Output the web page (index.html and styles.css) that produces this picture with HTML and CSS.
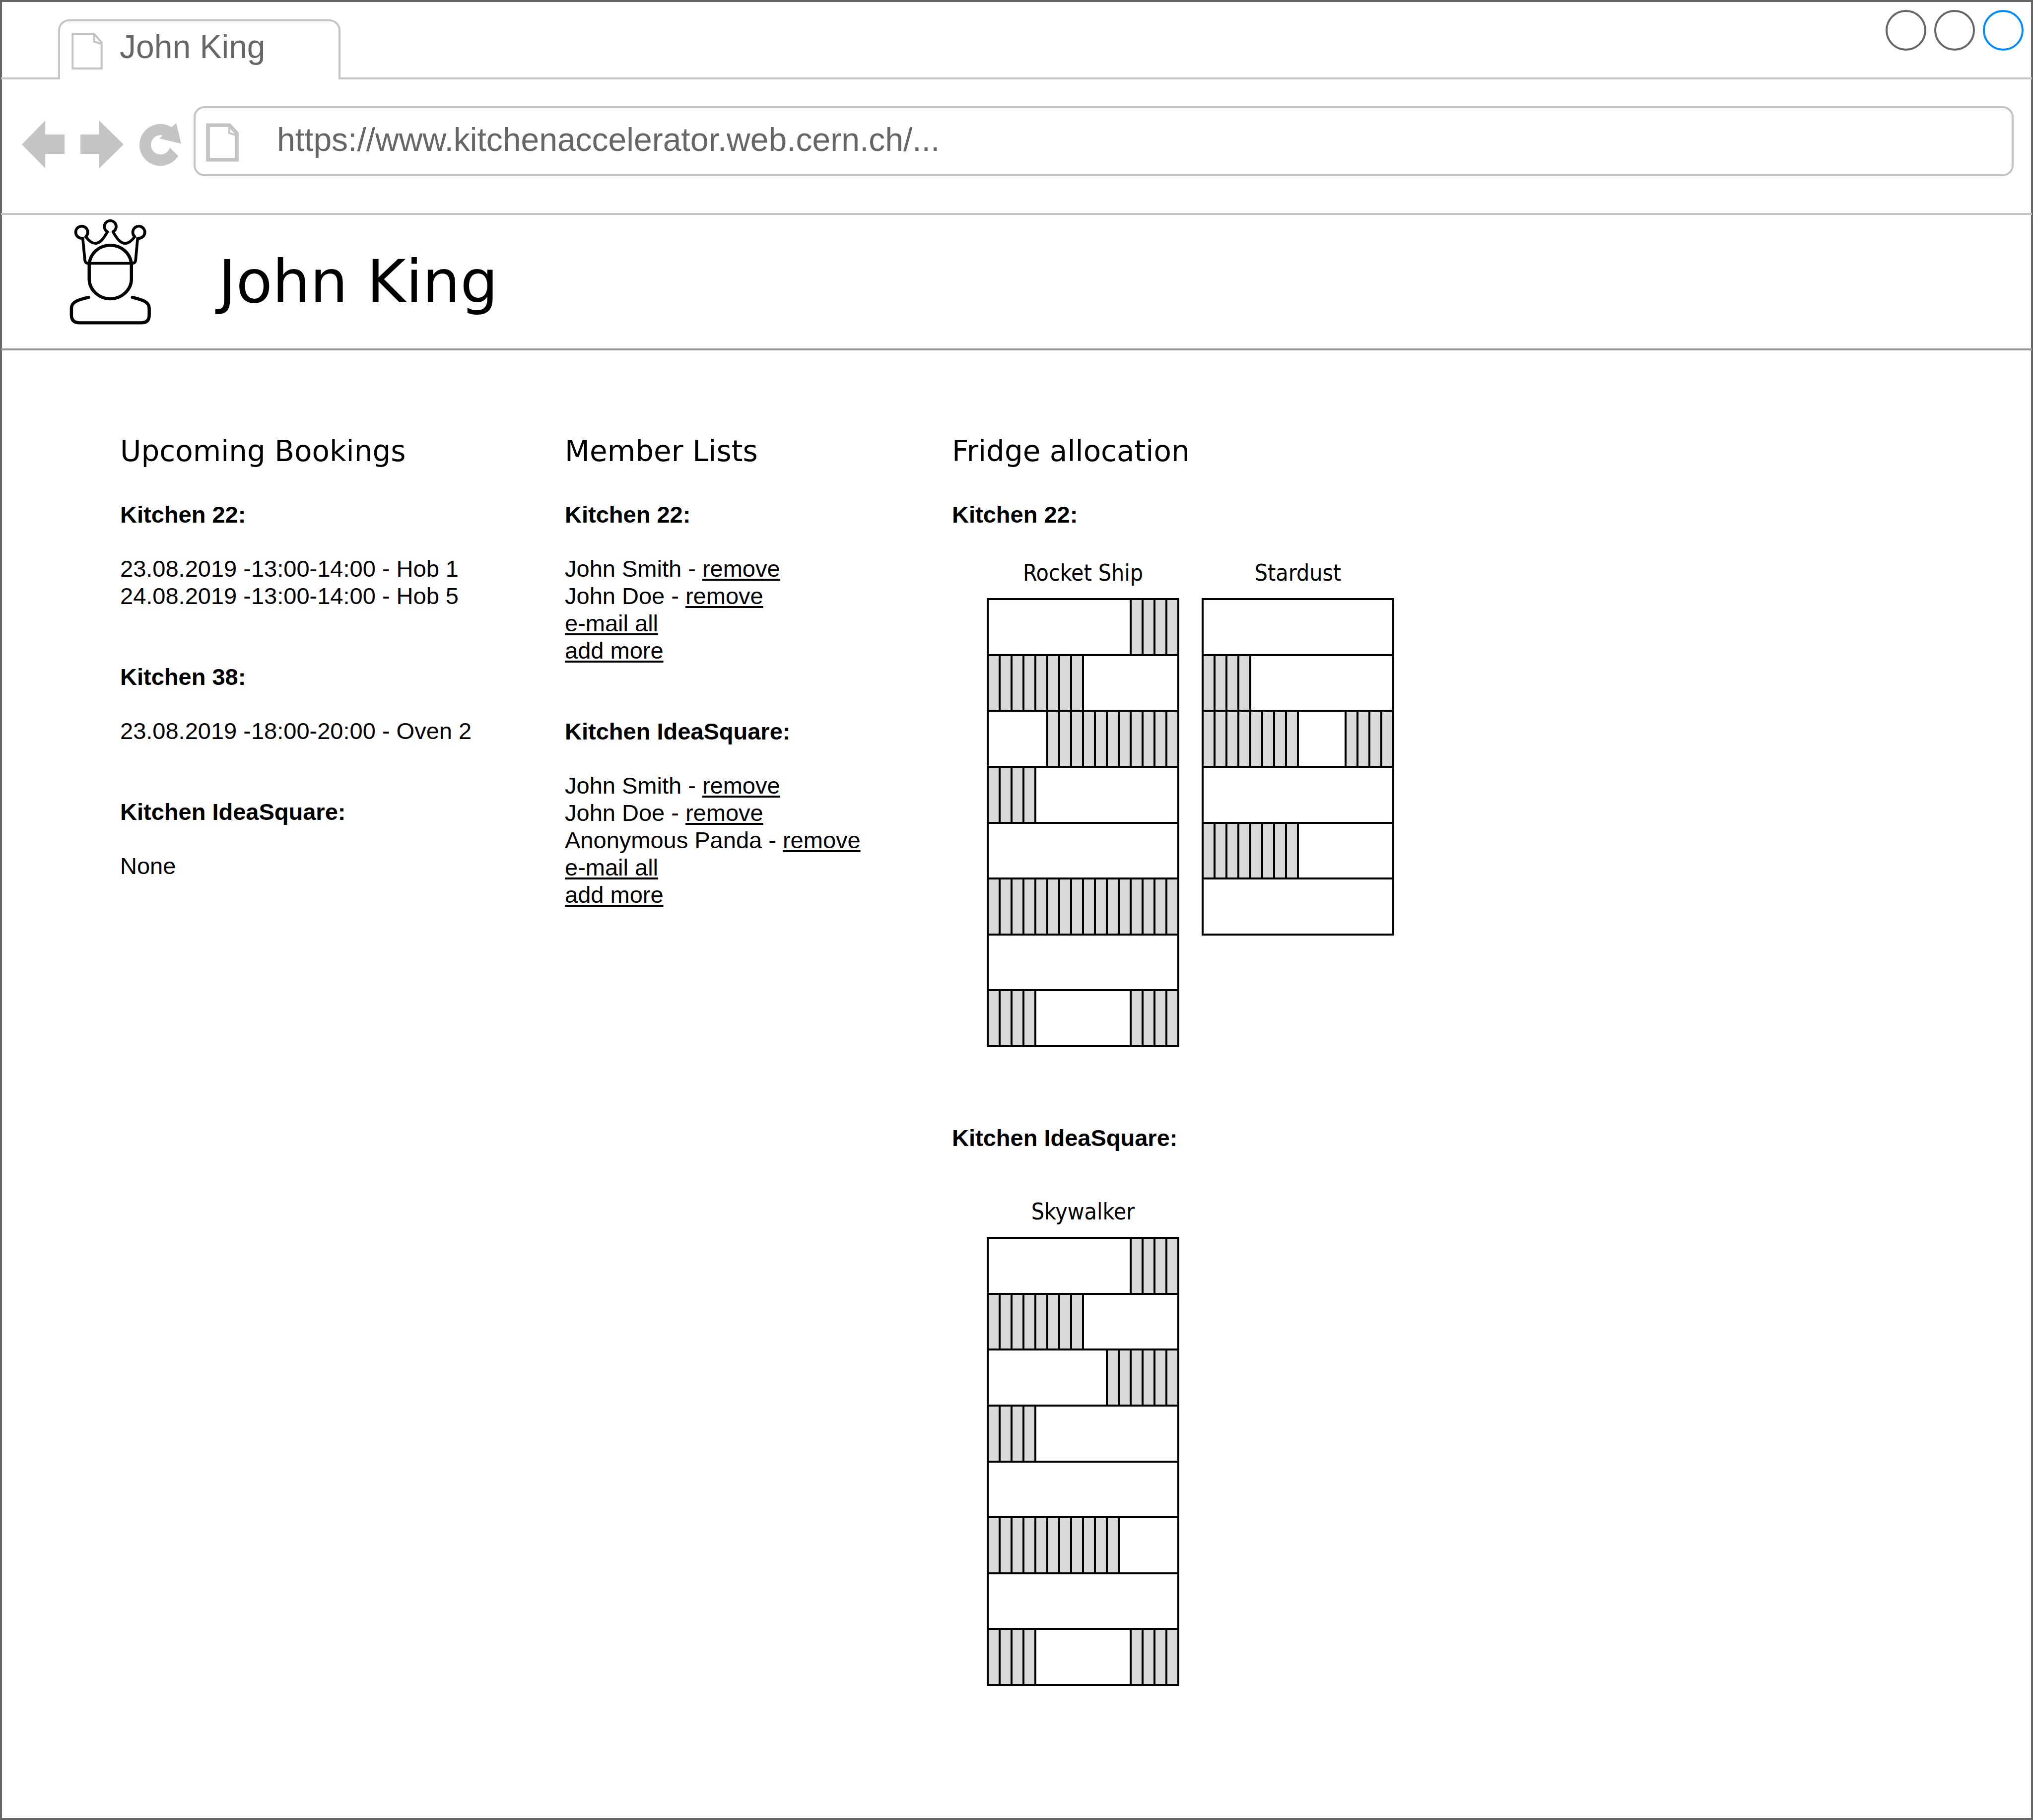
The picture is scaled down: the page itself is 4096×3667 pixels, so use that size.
FILE: index.html
```html
<!DOCTYPE html>
<html lang="en">
<head>
<meta charset="utf-8">
<title>John King</title>
<link rel="stylesheet" href="styles.css">
</head>
<body>
<div class="window">
  <div class="tab-strip">
    <button class="tab" type="button">
      <svg class="tab-icon" viewBox="185 85 80 95" aria-hidden="true"><path d="M187.500 87.500H243L262.500 110V177.500H187.500ZM243 87.500V108L262.500 113.500" fill="none" stroke="#c4c4c4" stroke-width="5"/></svg>
      <span>John King</span>
    </button>
    <div class="window-controls">
      <button class="control" type="button" aria-label="Minimize"></button>
      <button class="control" type="button" aria-label="Maximize"></button>
      <button class="control control-close" type="button" aria-label="Close"></button>
    </div>
  </div>

  <div class="toolbar">
    <nav class="nav" aria-label="History">
      <button type="button" aria-label="Back"><svg width="86" height="96" viewBox="0 0 86 96"><path d="M0 48 47 0V28H86V67H47V96Z" fill="#c4c4c4"/></svg></button>
      <button type="button" aria-label="Forward"><svg width="87" height="96" viewBox="0 0 87 96"><path d="M87 48 38 0V28H0V67H38V96Z" fill="#c4c4c4"/></svg></button>
      <button type="button" aria-label="Reload"><svg width="84" height="86" viewBox="360.500 317.500 107.500 110"><path d="M460.500 401.800A54 54 0 1 1 443 328L455.400 317.500 468 370.700 412 357 420.300 349A25 25 0 1 0 438.800 381Z" fill="#c4c4c4"/></svg></button>
    </nav>
    <label class="address">
      <svg class="address-icon" viewBox="532 317 85 101" aria-hidden="true"><path d="M537 322.500H592.500L612 343V412.500H537Z" fill="none" stroke="#c4c4c4" stroke-width="10"/><path d="M592.500 322V343L615 350" fill="none" stroke="#c4c4c4" stroke-width="5"/></svg>
      <input type="text" aria-label="Address" value="https://www.kitchenaccelerator.web.cern.ch/...">
    </label>
  </div>

  <header class="page-header">
    <svg class="avatar" viewBox="84 72 642 834" aria-hidden="true">
      <g fill="none" stroke="#000" stroke-width="22" stroke-linejoin="round">
        <path d="M192 226A47 47 0 1 1 214 215C236 245 262 267 288 267 325 267 350 235 384 177A46 46 0 1 1 427 177C460 235 486 267 523 267 549 267 575 245 597 215A47 47 0 1 1 618 226"/>
        <path d="M190 220 207 398Q210 423 234 423H577Q602 423 604 398L620 220"/>
      </g>
      <g fill="none" stroke="#000" stroke-width="25" stroke-linecap="round">
        <path d="M241 545V435C245 350 315 282 406 282S567 350 571 435V545C571 630 495 701 406 701S241 630 241 545Z"/>
        <path d="M236 689C160 708 102 722 102 775V830Q104 888 165 888H650Q709 888 710 830V775C710 722 655 708 579 689"/>
      </g>
    </svg>
    <h1>John King</h1>
  </header>

  <main class="columns">
    <section>
      <h2>Upcoming Bookings</h2>
      <div class="groups">
        <div class="group">
          <h3>Kitchen 22:</h3>
          <ul>
            <li>23.08.2019 -13:00-14:00 - Hob 1</li>
            <li>24.08.2019 -13:00-14:00 - Hob 5</li>
          </ul>
        </div>
        <div class="group">
          <h3>Kitchen 38:</h3>
          <ul>
            <li>23.08.2019 -18:00-20:00 - Oven 2</li>
          </ul>
        </div>
        <div class="group">
          <h3>Kitchen IdeaSquare:</h3>
          <p>None</p>
        </div>
      </div>
    </section>

    <section>
      <h2>Member Lists</h2>
      <div class="groups">
        <div class="group">
          <h3>Kitchen 22:</h3>
          <ul>
            <li>John Smith - <a href="#">remove</a></li>
            <li>John Doe - <a href="#">remove</a></li>
            <li><a href="#">e-mail all</a></li>
            <li><a href="#">add more</a></li>
          </ul>
        </div>
        <div class="group">
          <h3>Kitchen IdeaSquare:</h3>
          <ul>
            <li>John Smith - <a href="#">remove</a></li>
            <li>John Doe - <a href="#">remove</a></li>
            <li>Anonymous Panda - <a href="#">remove</a></li>
            <li><a href="#">e-mail all</a></li>
            <li><a href="#">add more</a></li>
          </ul>
        </div>
      </div>
    </section>

    <section>
      <h2>Fridge allocation</h2>
      <h3>Kitchen 22:</h3>
      <div class="fridges">
        <figure>
          <figcaption>Rocket Ship</figcaption>
          <div class="fridge">
            <div class="shelf"><span class="boxes right" style="--n:4"></span></div>
            <div class="shelf"><span class="boxes" style="--n:8"></span></div>
            <div class="shelf"><span class="boxes right" style="--n:11"></span></div>
            <div class="shelf"><span class="boxes" style="--n:4"></span></div>
            <div class="shelf"></div>
            <div class="shelf"><span class="boxes" style="--n:16"></span></div>
            <div class="shelf"></div>
            <div class="shelf"><span class="boxes" style="--n:4"></span><span class="boxes right" style="--n:4"></span></div>
          </div>
        </figure>
        <figure>
          <figcaption>Stardust</figcaption>
          <div class="fridge fridge-small">
            <div class="shelf"></div>
            <div class="shelf"><span class="boxes" style="--n:4"></span></div>
            <div class="shelf"><span class="boxes" style="--n:8"></span><span class="boxes right" style="--n:4"></span></div>
            <div class="shelf"></div>
            <div class="shelf"><span class="boxes" style="--n:8"></span></div>
            <div class="shelf"></div>
          </div>
        </figure>
      </div>
      <h3 class="next-kitchen">Kitchen IdeaSquare:</h3>
      <div class="fridges">
        <figure>
          <figcaption>Skywalker</figcaption>
          <div class="fridge">
            <div class="shelf"><span class="boxes right" style="--n:4"></span></div>
            <div class="shelf"><span class="boxes" style="--n:8"></span></div>
            <div class="shelf"><span class="boxes right" style="--n:6"></span></div>
            <div class="shelf"><span class="boxes" style="--n:4"></span></div>
            <div class="shelf"></div>
            <div class="shelf"><span class="boxes" style="--n:11"></span></div>
            <div class="shelf"></div>
            <div class="shelf"><span class="boxes" style="--n:4"></span><span class="boxes right" style="--n:4"></span></div>
          </div>
        </figure>
      </div>
    </section>
  </main>
</div>
</body>
</html>
```
FILE: styles.css
```css
* {
  box-sizing: border-box;
  margin: 0;
  padding: 0;
}

body {
  background: #fff;
  color: #000;
  font: 47px/55px "Liberation Sans", Arial, sans-serif;
}

button {
  background: none;
  border: 0;
  font: inherit;
  color: inherit;
}

svg {
  display: block;
  flex: none;
}

ul {
  list-style: none;
}

a {
  color: inherit;
  text-decoration: underline;
  text-decoration-thickness: 4px;
  text-underline-offset: 4px;
  text-decoration-skip-ink: none;
}

.window {
  min-height: 100vh;
  border: 4px solid #666;
}

/* Browser chrome: the rules run halfway over the window frame */
.tab-strip,
.toolbar,
.page-header {
  margin: 0 -2px;
  border-bottom: 4px solid #c4c4c4;
  display: flex;
}

.tab-strip {
  height: 156px;
  padding: 0 17px 0 115px;
  justify-content: space-between;
}

.tab {
  align-self: flex-end;
  width: 569px;
  height: 121px;
  margin-bottom: -4px;
  padding: 14px 23px 0;
  display: flex;
  align-items: flex-start;
  gap: 34px;
  background: #fff;
  border: 4px solid #c4c4c4;
  border-bottom: 0;
  border-radius: 22px 22px 0 0;
  color: #666;
  font-size: 66px;
  line-height: 74px;
}

.tab-icon {
  width: 63px;
  height: 74px;
  margin-top: 9px;
}

.window-controls {
  display: flex;
  gap: 16px;
  padding-top: 16px;
}

.control {
  width: 82px;
  height: 82px;
  border: 4px solid #666;
  border-radius: 50%;
}

.control-close {
  border-color: #008cff;
}

.toolbar {
  padding: 54px 37px 74px 42px;
  align-items: center;
  gap: 25px;
}

.nav {
  display: flex;
  align-items: center;
  gap: 32px;
  padding-top: 12px;
}

.address {
  flex: 1;
  height: 141px;
  padding: 0 21px;
  display: flex;
  align-items: center;
  gap: 77px;
  border: 4px solid #c4c4c4;
  border-radius: 22px;
}

.address-icon {
  width: 66px;
  height: 78px;
  margin-top: 4px;
}

.address input {
  flex: 1;
  min-width: 0;
  padding-bottom: 8px;
  border: 0;
  outline: 0;
  background: none;
  color: #666;
  font: 66px/74px "Liberation Sans", Arial, sans-serif;
}

.page-header {
  min-height: 273px;
  padding: 7px 137px 0;
  gap: 135px;
  border-color: #999;
}

.avatar {
  width: 166px;
  height: 215px;
}

h1 {
  margin-top: 58px;
  font: 120px/140px "DejaVu Sans", Verdana, sans-serif;
}

.columns {
  display: grid;
  grid-template-columns: 896px 780px 1fr;
  padding: 169px 0 238px 238px;
}

h2 {
  margin-bottom: 66px;
  font: 58px/68px "DejaVu Sans", Verdana, sans-serif;
}

h3 {
  font-size: 47px;
  line-height: 55px;
}

.groups {
  display: grid;
  gap: 108px;
}

.group {
  display: grid;
  gap: 54px;
}

.fridges {
  display: flex;
  align-items: flex-start;
  gap: 45px;
  padding: 63px 0 0 70px;
}

.next-kitchen {
  margin: 155px 0 31px;
}

figcaption {
  margin-bottom: 24px;
  text-align: center;
  font: 46px/54px "DejaVu Sans Condensed", Tahoma, sans-serif;
}

.fridge {
  width: 388px;
  height: 905px;
  display: grid;
  grid-auto-rows: 1fr;
  border-bottom: 4px solid #000;
  border-right: 4px solid #000;
}

.fridge-small {
  height: 680px;
}

.shelf {
  display: flex;
  margin-right: -4px;
  border-top: 4px solid #000;
  background: linear-gradient(#000, #000) left / 4px 100% no-repeat;
}

/* A run of --n allocated boxes, each 24px from divider to divider */
.boxes {
  width: calc(var(--n) * 24px + 4px);
  background: repeating-linear-gradient(90deg, #000 0 4px, #d9d9d9 4px 24px);
}

.right {
  margin-left: auto;
}
```
